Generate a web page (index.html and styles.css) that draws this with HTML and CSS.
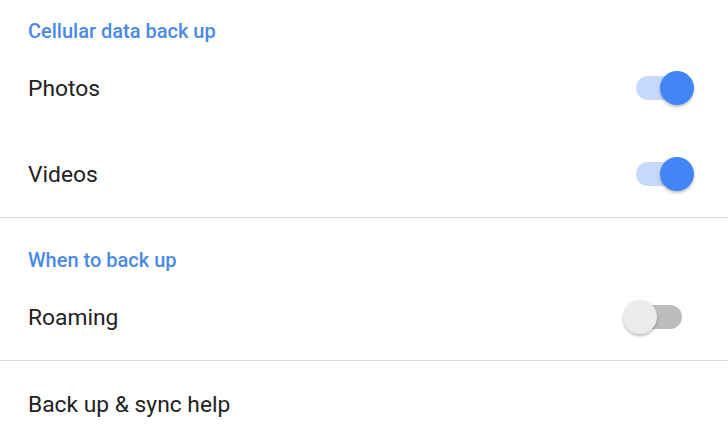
FILE: index.html
```html
<!DOCTYPE html>
<html lang="en">
<head>
  <meta charset="UTF-8" />
  <title>Back up settings</title>
  <link rel="stylesheet" href="styles.css">
</head>
<body>

  <div class="settings">
    <div class="section-title first">Cellular data back up</div>
    <div class="row">
      <span class="label">Photos</span>
      <span class="switch on"><span class="knob"></span></span>
    </div>
    <div class="row">
      <span class="label">Videos</span>
      <span class="switch on"><span class="knob"></span></span>
    </div>

    <div class="divider"></div>

    <div class="section-title">When to back up</div>
    <div class="row">
      <span class="label">Roaming</span>
      <span class="switch"><span class="knob"></span></span>
    </div>

    <div class="divider"></div>

    <div class="row">
      <span class="label">Back up &amp; sync help</span>
    </div>
  </div>

</body>
</html>
```

FILE: styles.css
```css
body {
  font-family: Roboto, "Noto Sans", sans-serif;
  margin: 0;
  background-color: #fff;
  overflow: hidden;
}

.settings {
  width: 728px;
}

.section-title {
  padding: 30px 28px 2px;
  line-height: 24px;
  font-size: 20px;
  font-weight: 500;
  color: #4a8ae6;
}

.section-title.first {
  padding-top: 19px;
}

.row {
  height: 86px;
  display: flex;
  align-items: center;
  justify-content: space-between;
  padding: 0 34px 0 28px;
}

.label {
  font-size: 22.8px;
  color: #222;
}

.divider {
  height: 1px;
  background-color: #dcdcdc;
}

/* toggle switch */
.switch {
  position: relative;
  width: 46px;
  height: 24px;
  border-radius: 12px;
  background-color: #bdbdbd;
  margin-right: 12px;
}

.knob {
  position: absolute;
  top: -5px;
  left: -13px;
  width: 34px;
  height: 34px;
  border-radius: 50%;
  background-color: #ececec;
  box-shadow: 0 2px 3px rgba(0,0,0,0.25);
}

.switch.on {
  background-color: #c6d9fa;
}

.switch.on .knob {
  left: 24px;
  background-color: #4285f4;
}
```
